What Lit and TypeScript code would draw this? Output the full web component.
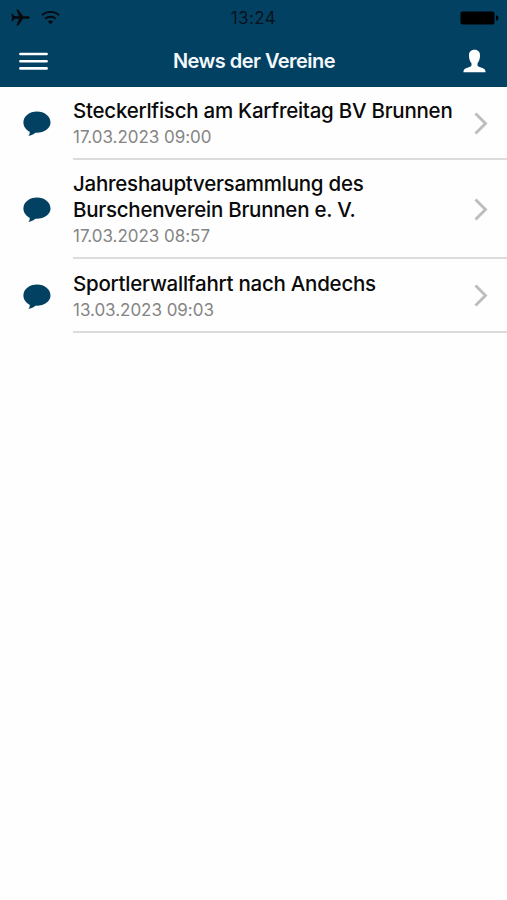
import { LitElement, html, css } from "lit";
import { customElement, property } from "lit/decorators.js";

@customElement("news-row")
class NewsRow extends LitElement {
  @property() heading = "";
  @property() date = "";

  static styles = css`
    :host { display: flex; }
    .icon { width: 73px; display: flex; align-items: center; flex: none; }
    .icon svg { margin-left: 23px; margin-top: 1px; }
    .body {
      flex: 1; display: flex; justify-content: space-between; align-items: center;
      padding: 11px 19px 11px 0; border-bottom: 2px solid #dcdcdd;
    }
    .title { font-size: 20.5px; line-height: 26px; font-weight: 450; letter-spacing: -0.250px; color: #0a0a0a; max-width: 386px; }
    .date { font-size: 17px; line-height: 20px; margin-top: 3px; color: #858585; letter-spacing: -0.030px; }
    .arrow { flex: none; }
  `;

  render() {
    return html`
      <div class="icon">
        <svg width="28" height="26" viewBox="0 0 28 26">
          <path fill="#034163" d="M14 .6C6.400.6.400 5.400.400 11.500c0 4 2.500 7.200 6.200 9.200.5 1.500-.2 2.900-1.300 4.100 2.900-.2 5.200-1.400 7-3.100 8.500.5 15.200-4 15.200-10.200C27.500 5.400 21.500.6 14 .6z"/>
        </svg>
      </div>
      <div class="body">
        <div>
          <div class="title">${this.heading}</div>
          <div class="date">${this.date}</div>
        </div>
        <svg class="arrow" width="15" height="24" viewBox="0 0 15 24">
          <path d="M2.500 2.500L12.500 12.500L2.500 22.500" fill="none" stroke="#bdbdbd" stroke-width="2.900"/>
        </svg>
      </div>
    `;
  }
}

@customElement("app-root")
class AppRoot extends LitElement {
  static styles = css`
    :host { display: block; height: 900px; background: #fefefe; font-family: Inter, "Liberation Sans", sans-serif; overflow: hidden; }
    .top { background: #034163; height: 87px; }
    .status { height: 35px; display: grid; grid-template-columns: 1fr auto 1fr; align-items: center; color: #06131c; }
    .left { display: flex; gap: 11px; align-items: center; padding-left: 11px; }
    .clock { font-size: 17px; line-height: 20px; letter-spacing: 0.400px; }
    .battery { justify-self: end; margin-right: 8px; }
    .nav { height: 52px; display: grid; grid-template-columns: 1fr auto 1fr; align-items: center; }
    .menu { margin-left: 19px; }
    .name { font-size: 20px; line-height: 24px; font-weight: 570; letter-spacing: -0.530px; color: #f3f9fc; padding-left: 1px; }
    .user { justify-self: end; margin-right: 21px; }
    svg { display: block; }
    news-row:last-of-type { height: 74px; }
  `;

  private news = [
    { heading: "Steckerlfisch am Karfreitag BV Brunnen", date: "17.03.2023 09:00" },
    { heading: "Jahreshauptversammlung des Burschenverein Brunnen e. V.", date: "17.03.2023 08:57" },
    { heading: "Sportlerwallfahrt nach Andechs", date: "13.03.2023 09:03" },
  ];

  render() {
    return html`
      <div class="top">
        <div class="status">
          <div class="left">
            <svg width="19" height="17" viewBox="0 0 19 17">
              <path fill="#050a0e" d="M18.800 8.500c0-.8-1-1.300-2.200-1.300h-4.400L7.200.500H5.400l2.600 6.700H3.600L1.600 4.700H.3l1 3.800-1 3.800h1.300l2-2.500H8l-2.600 6.700h1.800l5-6.700h4.400c1.200 0 2.200-.5 2.200-1.300z"/>
            </svg>
            <svg width="19" height="15" viewBox="0 0 19 15">
              <g fill="none" stroke="#050a0e" stroke-width="1.900">
                <path d="M1 5.300a12.300 12.300 0 0 1 17 0"/>
                <path d="M4.200 8.800a7.800 7.800 0 0 1 10.600 0"/>
              </g>
              <path fill="#050a0e" d="M9.500 14.300L6.900 11.600a3.800 3.800 0 0 1 5.200 0z"/>
            </svg>
          </div>
          <div class="clock">13:24</div>
          <svg class="battery" width="39" height="14" viewBox="0 0 39 14">
            <rect x=".5" y=".5" width="34" height="13" rx="2" fill="#000"/>
            <path d="M36 4.200c1.600.4 2.400 1.500 2.400 2.800s-.8 2.400-2.400 2.800z" fill="#000"/>
          </svg>
        </div>
        <div class="nav">
          <svg class="menu" width="29" height="20" viewBox="0 0 29 20">
            <path d="M1.400 3h26.200M1.400 10.200h26.200M1.400 17.400h26.200" stroke="#fff" stroke-width="2.600" stroke-linecap="round"/>
          </svg>
          <div class="name">News der Vereine</div>
          <svg class="user" width="23" height="24" viewBox="0 0 23 24">
            <path fill="#fff" d="M11.500.7c-3.800 0-5.700 2.500-5.500 6 .1 2.700.7 5.300 2.300 7.200.5 1.500.3 3-.8 3.700-2.200 1.300-6 1.500-6.900 4.100L.4 23.300h22.200l-.2-1.600c-.9-2.600-4.700-2.800-6.900-4.100-1.100-.7-1.300-2.200-.8-3.700 1.600-1.900 2.200-4.500 2.300-7.200.2-3.500-1.700-6-5.500-6z"/>
          </svg>
        </div>
      </div>
      ${this.news.map((n) => html`<news-row .heading=${n.heading} .date=${n.date}></news-row>`)}
    `;
  }
}
